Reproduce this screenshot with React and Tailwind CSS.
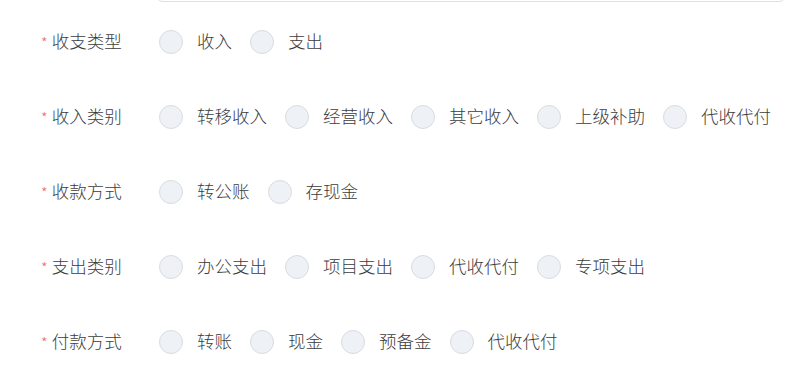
const rows = [
  { label: "收支类型", options: ["收入", "支出"] },
  { label: "收入类别", options: ["转移收入", "经营收入", "其它收入", "上级补助", "代收代付"] },
  { label: "收款方式", options: ["转公账", "存现金"] },
  { label: "支出类别", options: ["办公支出", "项目支出", "代收代付", "专项支出"] },
  { label: "付款方式", options: ["转账", "现金", "预备金", "代收代付"] },
];

function Radio({ text }) {
  return (
    <label className="flex items-center mr-[18px] cursor-pointer">
      <span className="w-6 h-6 rounded-full border border-[#d8dbe0] bg-[#eef1f5] shrink-0"></span>
      <span className="ml-[14px] whitespace-nowrap">{text}</span>
    </label>
  );
}

export default function App() {
  return (
    <div
      className="w-[800px] h-[377px] overflow-hidden bg-white text-[#3c3c3c] text-[17.5px] font-light"
      style={{ fontFamily: '"Noto Sans CJK SC", "Liberation Sans", sans-serif' }}
    >
      <div className="ml-[158px] w-[626px] h-[40px] -mt-[38px] border border-[#dcdfe6] rounded-[4px]"></div>
      <div className="mt-[2px]">
        {rows.map((row) => (
          <div key={row.label} className="flex items-center h-[75px]">
            <div className="w-[159px] pl-[41px] flex items-center">
              <span className="text-[#f56c6c] text-[15px] mr-[4px] mt-[3px]">*</span>
              <span>{row.label}</span>
            </div>
            <div className="flex items-center">
              {row.options.map((o) => (
                <Radio key={o} text={o} />
              ))}
            </div>
          </div>
        ))}
      </div>
    </div>
  );
}
